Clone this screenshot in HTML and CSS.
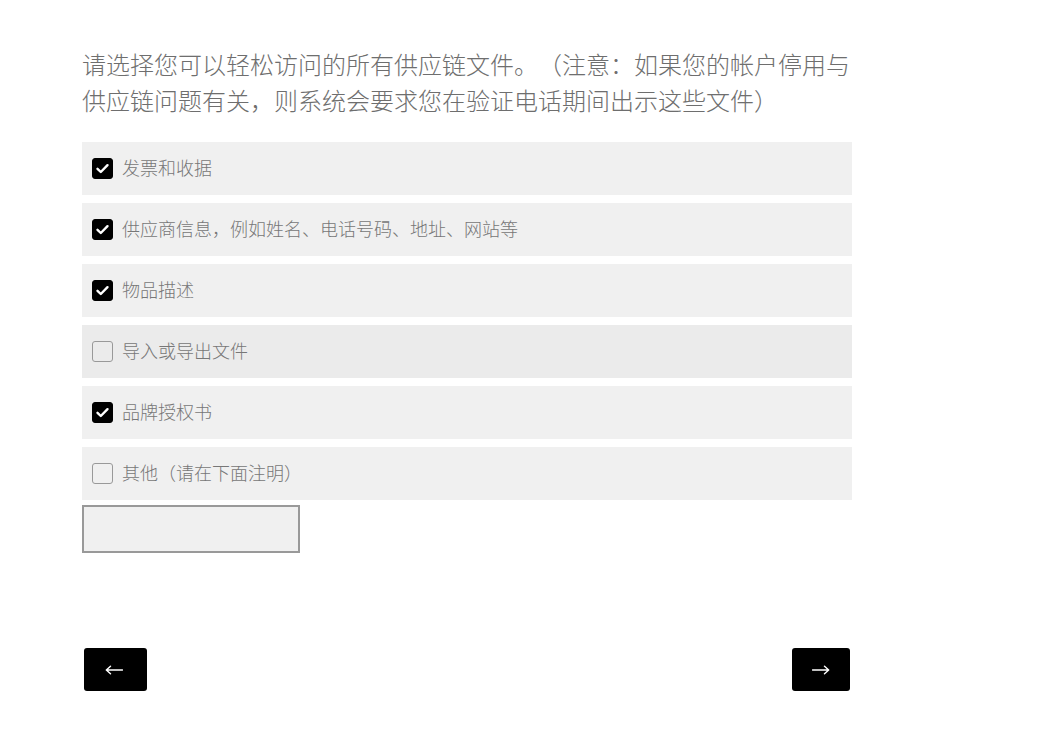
FILE: index.html
```html
<!DOCTYPE html>
<html lang="zh">
<head>
<meta charset="utf-8">
<link rel="stylesheet" href="styles.css">
</head>
<body>
<main class="form">
  <h1 class="question">请选择您可以轻松访问的所有供应链文件。（注意：如果您的帐户停用与供应链问题有关，则系统会要求您在验证电话期间出示这些文件）</h1>
  <div class="options">
    <label class="option"><span class="box checked"><svg viewBox="0 0 21 21" width="21" height="21"><path d="M5.5 10.8l3.3 3.2L15.5 7.2" fill="none" stroke="#fff" stroke-width="2.4" stroke-linecap="round" stroke-linejoin="round"/></svg></span><span class="text">发票和收据</span></label>
    <label class="option"><span class="box checked"><svg viewBox="0 0 21 21" width="21" height="21"><path d="M5.5 10.8l3.3 3.2L15.5 7.2" fill="none" stroke="#fff" stroke-width="2.4" stroke-linecap="round" stroke-linejoin="round"/></svg></span><span class="text">供应商信息，例如姓名、电话号码、地址、网站等</span></label>
    <label class="option"><span class="box checked"><svg viewBox="0 0 21 21" width="21" height="21"><path d="M5.5 10.8l3.3 3.2L15.5 7.2" fill="none" stroke="#fff" stroke-width="2.4" stroke-linecap="round" stroke-linejoin="round"/></svg></span><span class="text">物品描述</span></label>
    <label class="option hover"><span class="box"></span><span class="text">导入或导出文件</span></label>
    <label class="option"><span class="box checked"><svg viewBox="0 0 21 21" width="21" height="21"><path d="M5.5 10.8l3.3 3.2L15.5 7.2" fill="none" stroke="#fff" stroke-width="2.4" stroke-linecap="round" stroke-linejoin="round"/></svg></span><span class="text">品牌授权书</span></label>
    <label class="option"><span class="box"></span><span class="text">其他（请在下面注明）</span></label>
  </div>
  <input class="other" type="text">
  <div class="nav">
    <button class="btn back" aria-label="←"><svg viewBox="0 0 18 10" width="18" height="10"><path d="M17.5 5H1.5M5.5 1.2L1.3 5l4.2 3.8" fill="none" stroke="#fff" stroke-width="1.4" stroke-linecap="round" stroke-linejoin="round"/></svg></button>
    <button class="btn next" aria-label="→"><svg viewBox="0 0 18 10" width="18" height="10"><path d="M0.5 5h16M12.5 1.2L16.7 5l-4.2 3.8" fill="none" stroke="#fff" stroke-width="1.4" stroke-linecap="round" stroke-linejoin="round"/></svg></button>
  </div>
</main>
</body>
</html>
```
FILE: styles.css
```css
html, body {
  margin: 0;
  padding: 0;
  background: #fff;
}
body {
  font-family: "Noto Sans CJK SC", "Noto Sans", sans-serif;
  color: #6e6e6e;
}
.form {
  width: 770px;
  margin-left: 82px;
  padding-top: 46px;
}
.question {
  margin: 0 0 24px 0;
  font-size: 24px;
  line-height: 36px;
  font-weight: 300;
  color: #6e6e6e;
  text-spacing-trim: space-all;
}
.options {
  display: flex;
  flex-direction: column;
  gap: 8px;
}
.option {
  display: flex;
  align-items: center;
  height: 53px;
  padding-left: 10px;
  padding-bottom: 3px;
  background: #f0f0f0;
  box-sizing: border-box;
}
.option.hover {
  background: #ebebeb;
}
.box {
  width: 21px;
  height: 21px;
  box-sizing: border-box;
  border: 1.5px solid #999;
  border-radius: 3px;
  margin-right: 9px;
  margin-top: 3px;
  flex: none;
  position: relative;
}
.box.checked {
  background: #000;
  border-color: #000;
}
.box svg {
  display: block;
  position: absolute;
  left: -1.5px;
  top: -1.5px;
}
.text {
  font-size: 18px;
  font-weight: 300;
  color: #777;
  text-spacing-trim: space-all;
}
.other {
  display: block;
  margin-top: 5px;
  width: 218px;
  height: 48px;
  box-sizing: border-box;
  border: 2px solid #999;
  background: #f0f0f0;
  outline: none;
}
.nav {
  display: flex;
  justify-content: space-between;
  margin-top: 95px;
  padding: 0 2px;
}
.btn {
  height: 43px;
  background: #000;
  color: #fff;
  border: none;
  border-radius: 3px;
  padding: 0;
  display: flex;
  align-items: center;
  justify-content: center;
}
.btn svg {
  display: block;
}
.back { width: 63px; padding-right: 4px; }
.next { width: 58px; }
```
